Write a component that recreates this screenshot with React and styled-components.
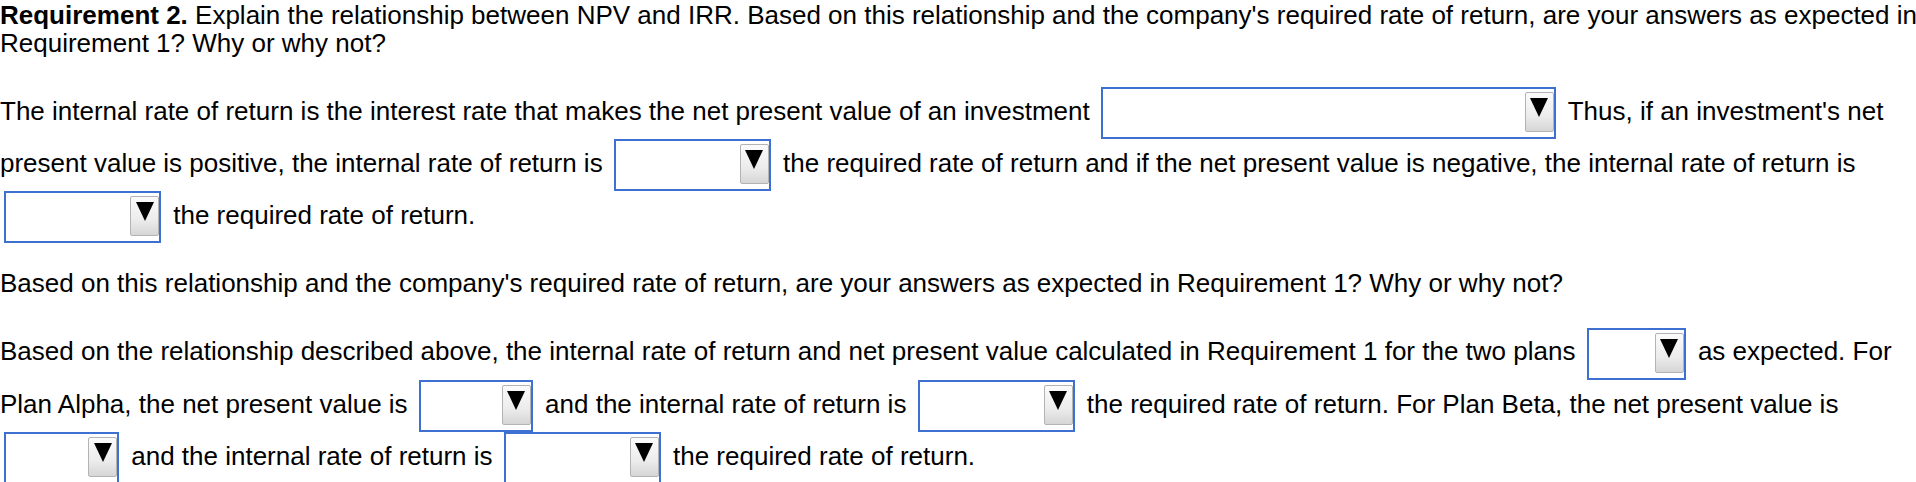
import React from "react";
import styled, { createGlobalStyle } from "styled-components";

const GlobalStyle = createGlobalStyle`
  html, body {
    margin: 0;
    padding: 0;
    background: #fff;
    overflow: hidden;
  }
`;

const Page = styled.div`
  width: 1940px;
  font-family: "Liberation Sans", Arial, Helvetica, sans-serif;
  font-size: 26px;
  color: #000;
`;

const Intro = styled.p`
  margin: 0 0 28px;
  padding-top: 1px;
  line-height: 28px;

  strong {
    font-weight: bold;
  }
`;

const Para = styled.p`
  margin: 0 0 16px;
  line-height: 52px;
`;

const Box = styled.span`
  display: inline-flex;
  justify-content: flex-end;
  align-items: flex-start;
  box-sizing: border-box;
  width: ${(p) => p.$w}px;
  height: 52px;
  margin: -2px 5px -2px 4px;
  padding-top: 3px;
  vertical-align: middle;
  background: #fff;
  border: 2px solid #3d70d0;
`;

const Arrow = styled.span`
  display: flex;
  justify-content: center;
  box-sizing: border-box;
  width: 29px;
  height: 40px;
  padding-top: 5px;
  background: linear-gradient(to bottom, #fbfbfb 0%, #ececec 60%, #d6d6d6 100%);
  border: 1px solid #b3b3b3;
  border-radius: 2px;

  svg {
    display: block;
  }
`;

const Drop = ({ w }) => (
  <Box $w={w}>
    <Arrow>
      <svg width="18" height="19" viewBox="0 0 18 19">
        <polygon points="0,0 18,0 9,19" fill="#000" />
      </svg>
    </Arrow>
  </Box>
);

const App = () => {
  return (
    <>
      <GlobalStyle />
      <Page>
        <Intro>
          <strong>Requirement 2.</strong> Explain the relationship between NPV and IRR. Based on this
          relationship and the company's required rate of return, are your answers as expected in
          Requirement 1? Why or why not?
        </Intro>
        <Para>
          The internal rate of return is the interest rate that makes the net present value of an
          investment <Drop w={455} /> Thus, if an investment's net present value is positive, the
          internal rate of return is <Drop w={157} /> the required rate of return and if the net
          present value is negative, the internal rate of return is <Drop w={157} /> the required
          rate of return.
        </Para>
        <Para>
          Based on this relationship and the company's required rate of return, are your answers as
          expected in Requirement 1? Why or why not?
        </Para>
        <Para>
          Based on the relationship described above, the internal rate of return and net present
          value calculated in Requirement 1 for the two plans <Drop w={99} /> as expected. For Plan
          Alpha, the net present value is <Drop w={114} /> and the internal rate of return is{" "}
          <Drop w={157} /> the required rate of return. For Plan Beta, the net present value is{" "}
          <Drop w={115} /> and the internal rate of return is <Drop w={157} /> the required rate of
          return.
        </Para>
      </Page>
    </>
  );
};

export default App;
